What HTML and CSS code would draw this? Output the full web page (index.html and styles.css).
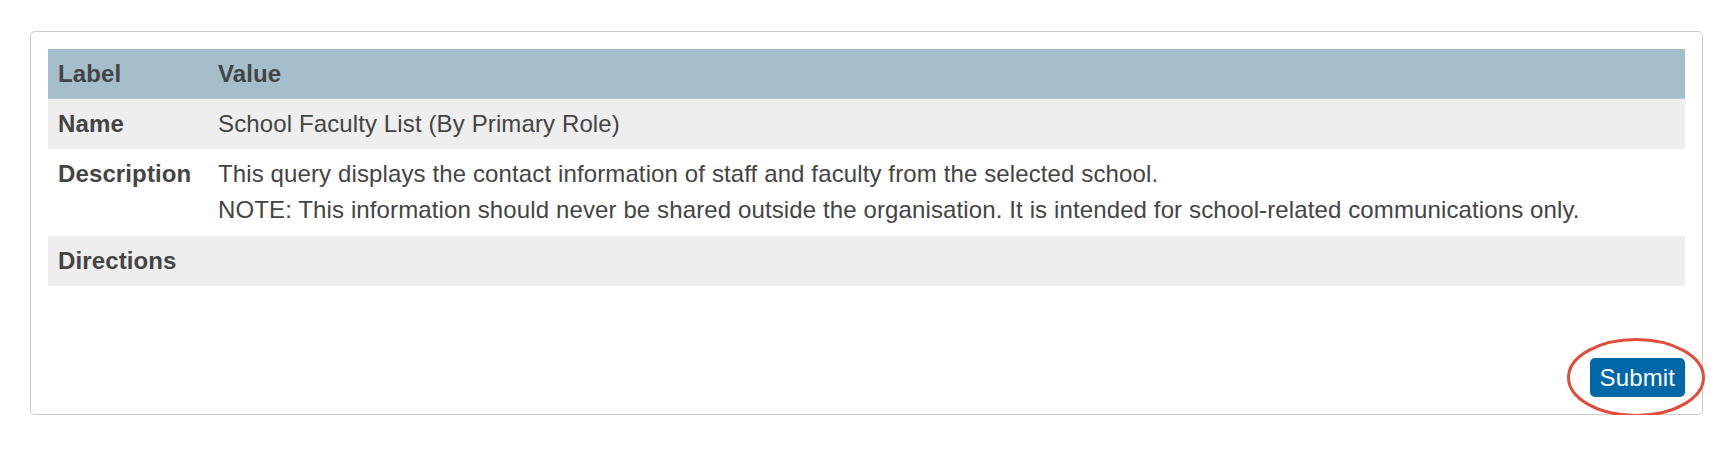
FILE: index.html
```html
<!DOCTYPE html>
<html>
<head>
<meta charset="utf-8">
<link rel="stylesheet" href="styles.css">
</head>
<body>
<div class="card">
  <table class="info">
    <thead>
      <tr><th class="col-label">Label</th><th>Value</th></tr>
    </thead>
    <tbody>
      <tr class="alt"><th>Name</th><td>School Faculty List (By Primary Role)</td></tr>
      <tr><th>Description</th><td class="desc">This query displays the contact information of staff and faculty from the selected school.<br>NOTE: This information should never be shared outside the organisation. It is intended for school-related communications only.</td></tr>
      <tr class="alt"><th>Directions</th><td></td></tr>
    </tbody>
  </table>
  <div class="actions">
    <div class="btn-wrap">
      <button class="submit">Submit</button>
      <svg class="ring" width="138" height="79" viewBox="0 0 138 79"><ellipse cx="69" cy="39.5" rx="67.5" ry="38" fill="none" stroke="#e14c3b" stroke-width="3"/></svg>
    </div>
  </div>
</div>
</body>
</html>
```
FILE: styles.css
```css
html, body { margin: 0; padding: 0; background: #fff; }
body {
  font-family: "Liberation Sans", Arial, Helvetica, sans-serif;
  font-size: 24px;
  color: #444;
  letter-spacing: 0.12px;
  padding: 31px 27px 0 30px;
}
.card {
  border: 1px solid #cccccc;
  border-radius: 5px;
  padding: 17px;
}
.info {
  width: 100%;
  border-collapse: collapse;
  line-height: 36px;
}
.info th, .info td {
  text-align: left;
  vertical-align: top;
  padding: 7px 10px;
}
.info th { font-weight: bold; }
.info td { font-weight: normal; }
.info td.desc { padding-bottom: 8px; }
.col-label { width: 140px; }
.info thead tr { background: #a4bfcb; }
.info thead th { border-bottom: 1px solid #b6cad4; padding-bottom: 6px; }
.alt { background: #eeeeee; }
.actions {
  display: flex;
  justify-content: flex-end;
  margin-top: 72px;
}
.btn-wrap { position: relative; }
.submit {
  display: block;
  font-family: "Liberation Sans", Arial, Helvetica, sans-serif;
  font-size: 24px;
  line-height: 29px;
  letter-spacing: 0.12px;
  color: #fff;
  background: #0067a9;
  border: 0;
  border-radius: 5px;
  padding: 5px 10px;
  height: 39px;
}
.ring {
  position: absolute;
  left: -23px;
  top: -20px;
  pointer-events: none;
}
```
